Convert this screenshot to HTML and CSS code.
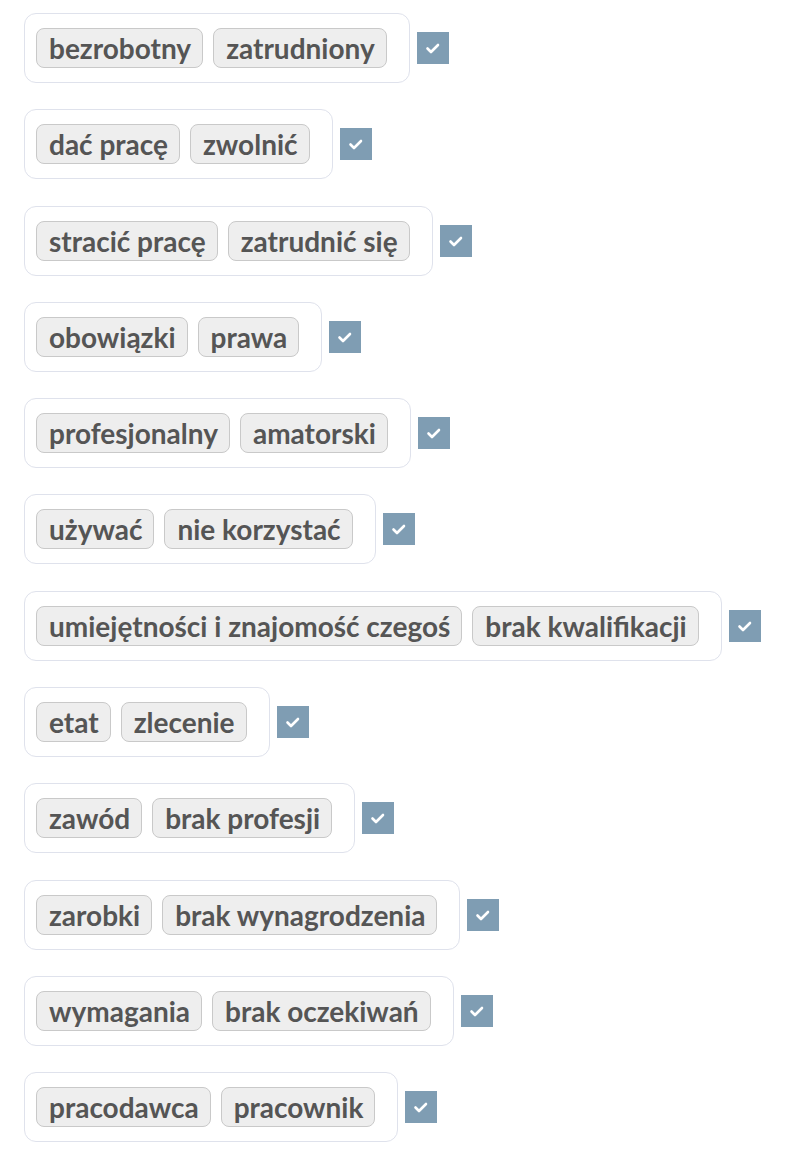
FILE: index.html
```html
<!DOCTYPE html>
<html lang="pl">
<head>
<meta charset="utf-8">
<link rel="stylesheet" href="styles.css">
</head>
<body>
<div class="list">
  <div class="row"><div class="pair"><span class="chip">bezrobotny</span><span class="chip">zatrudniony</span></div><span class="check"><svg viewBox="0 0 32 32"><path d="M10.5 16.5l3.5 3.5 7-7"/></svg></span></div>
  <div class="row"><div class="pair"><span class="chip">dać pracę</span><span class="chip">zwolnić</span></div><span class="check"><svg viewBox="0 0 32 32"><path d="M10.5 16.5l3.5 3.5 7-7"/></svg></span></div>
  <div class="row"><div class="pair"><span class="chip">stracić pracę</span><span class="chip">zatrudnić się</span></div><span class="check"><svg viewBox="0 0 32 32"><path d="M10.5 16.5l3.5 3.5 7-7"/></svg></span></div>
  <div class="row"><div class="pair"><span class="chip">obowiązki</span><span class="chip">prawa</span></div><span class="check"><svg viewBox="0 0 32 32"><path d="M10.5 16.5l3.5 3.5 7-7"/></svg></span></div>
  <div class="row"><div class="pair"><span class="chip">profesjonalny</span><span class="chip">amatorski</span></div><span class="check"><svg viewBox="0 0 32 32"><path d="M10.5 16.5l3.5 3.5 7-7"/></svg></span></div>
  <div class="row"><div class="pair"><span class="chip">używać</span><span class="chip">nie korzystać</span></div><span class="check"><svg viewBox="0 0 32 32"><path d="M10.5 16.5l3.5 3.5 7-7"/></svg></span></div>
  <div class="row"><div class="pair"><span class="chip">umiejętności i znajomość czegoś</span><span class="chip">brak kwalifikacji</span></div><span class="check"><svg viewBox="0 0 32 32"><path d="M10.5 16.5l3.5 3.5 7-7"/></svg></span></div>
  <div class="row"><div class="pair"><span class="chip">etat</span><span class="chip">zlecenie</span></div><span class="check"><svg viewBox="0 0 32 32"><path d="M10.5 16.5l3.5 3.5 7-7"/></svg></span></div>
  <div class="row"><div class="pair"><span class="chip">zawód</span><span class="chip">brak profesji</span></div><span class="check"><svg viewBox="0 0 32 32"><path d="M10.5 16.5l3.5 3.5 7-7"/></svg></span></div>
  <div class="row"><div class="pair"><span class="chip">zarobki</span><span class="chip">brak wynagrodzenia</span></div><span class="check"><svg viewBox="0 0 32 32"><path d="M10.5 16.5l3.5 3.5 7-7"/></svg></span></div>
  <div class="row"><div class="pair"><span class="chip">wymagania</span><span class="chip">brak oczekiwań</span></div><span class="check"><svg viewBox="0 0 32 32"><path d="M10.5 16.5l3.5 3.5 7-7"/></svg></span></div>
  <div class="row"><div class="pair"><span class="chip">pracodawca</span><span class="chip">pracownik</span></div><span class="check"><svg viewBox="0 0 32 32"><path d="M10.5 16.5l3.5 3.5 7-7"/></svg></span></div>
</div>
</body>
</html>
```
FILE: styles.css
```css
html, body {
  margin: 0;
  padding: 0;
  background: #ffffff;
}
body {
  font-family: Lato, "Open Sans", sans-serif;
}
.list {
  display: flex;
  flex-direction: column;
  gap: 26.3px;
  padding: 13px 0 0 24px;
}
.row {
  display: flex;
  align-items: center;
  gap: 7px;
}
.pair {
  display: flex;
  gap: 10px;
  padding: 14px 22px 14px 11px;
  border: 1px solid #dfe2ec;
  border-radius: 12px;
}
.chip {
  display: block;
  height: 38px;
  line-height: 38px;
  padding: 0 11px 0 12px;
  border: 1px solid #c9c9c9;
  border-radius: 8px;
  background: #eeeeee;
  color: #555555;
  font-weight: 700;
  font-size: 28px;
  white-space: nowrap;
}
.check {
  display: block;
  width: 32px;
  height: 32px;
  background: #7f9db3;
}
.check svg {
  display: block;
  width: 32px;
  height: 32px;
  fill: none;
  stroke: #ffffff;
  stroke-width: 2.6;
  stroke-linecap: round;
  stroke-linejoin: round;
}
```
